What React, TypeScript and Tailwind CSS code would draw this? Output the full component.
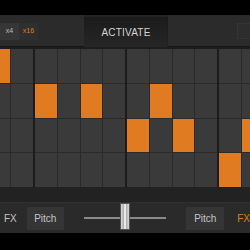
import React from "react";

const ON: Record<number, number[]> = {
  0: [2],
  1: [4, 6, 9],
  2: [8, 10, 13],
  3: [12],
};

const Group = ({ index }: { index: number }) => {
  const cells = [];
  for (let r = 0; r < 4; r++) {
    for (let c = 0; c < 4; c++) {
      const col = index * 4 + c;
      const on = ON[r].includes(col);
      cells.push(
        <div
          key={`${r}-${c}`}
          className={on ? "bg-[#e07b22]" : "bg-[#3a3a3a]"}
        />
      );
    }
  }
  return (
    <div className="grid grid-cols-4 grid-rows-4 gap-px w-[90px] h-[138px] shrink-0 bg-[#2a2a2a]">
      {cells}
    </div>
  );
};

const App = () => {
  return (
    <div
      className="w-[250px] h-[250px] bg-black flex flex-col overflow-hidden"
      style={{ fontFamily: '"Liberation Sans", Arial, sans-serif' }}
    >
      <div className="h-[15px] shrink-0" />

      {/* header */}
      <div className="h-[32px] shrink-0 flex bg-[#242424]">
        <div className="w-[84px] h-[31px] bg-[#2b2b2b] flex items-center shadow-[0_1px_1px_#151515]">
          <div className="flex h-[17px] mt-[1px]">
            <div className="w-[19px] bg-[#363636] text-[#bdbdbd] text-[7px] flex items-center justify-center">
              x4
            </div>
            <div className="w-[19px] bg-[#2f2f2f] text-[#d9801f] text-[7px] flex items-center justify-center">
              x16
            </div>
          </div>
        </div>
        <div className="w-[84px] mt-[2px] bg-gradient-to-b from-[#1b1b1b] to-[#262626] flex items-center justify-center text-[#d4d4d4] text-[10px] tracking-[0.2px]">
          ACTIVATE
        </div>
        <div className="flex-1 h-[31px] bg-[#2b2b2b] flex items-center justify-end shadow-[0_1px_1px_#151515]">
          <div className="w-[14px] h-[16px] border border-[#353535] bg-[#2d2d2d] mr-[-1px]" />
        </div>
      </div>

      <div className="h-[2px] shrink-0 bg-[#1d1d1d]" />

      {/* step grid */}
      <div className="h-[138px] shrink-0 bg-[#1c1c1c] overflow-hidden">
        <div className="flex gap-[2px] ml-[-57px]">
          {[0, 1, 2, 3].map((g) => (
            <Group key={g} index={g} />
          ))}
        </div>
      </div>

      <div className="h-[15px] shrink-0 bg-[#222222]" />

      {/* controls */}
      <div className="h-[31px] shrink-0 bg-[#2a2a2a] border-t border-[#303030] flex items-center text-[10px]">
        <span className="ml-[4px] w-[23px] text-[#c4c4c4]">FX</span>
        <div className="w-[37px] h-[23px] bg-[#353535] text-[#c4c4c4] flex items-center justify-center">
          Pitch
        </div>
        <div className="relative ml-[20px] w-[83px] h-full flex items-center">
          <div className="w-full h-[2px] bg-[#8a8a8a]" />
          <div className="absolute left-[36px] top-[0px] w-[10px] h-[27px] bg-gradient-to-r from-[#d8d8d8] via-[#9a9a9a] to-[#d8d8d8] border border-[#555] flex justify-center">
            <div className="w-[2px] h-full bg-[#e8e8e8]" />
          </div>
        </div>
        <div className="ml-[20px] w-[38px] h-[23px] bg-[#353535] text-[#c4c4c4] flex items-center justify-center">
          Pitch
        </div>
        <span className="ml-[13px] text-[#d9801f]">FX</span>
      </div>

      <div className="flex-1 bg-black" />
    </div>
  );
};

export default App;
